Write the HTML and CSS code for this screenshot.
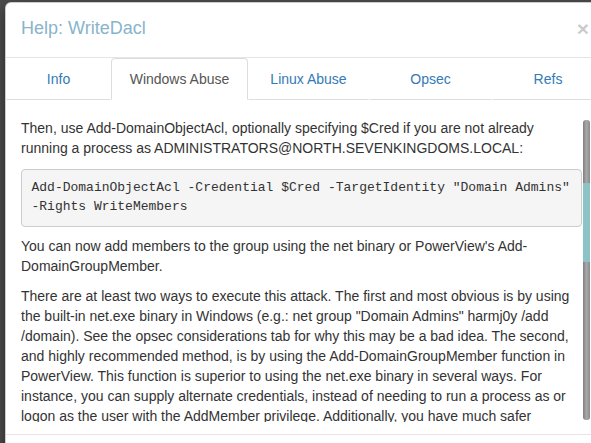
FILE: index.html
```html
<!DOCTYPE html>
<html>
<head>
<meta charset="utf-8">
<link rel="stylesheet" href="styles.css">
</head>
<body>
<div class="modal">
  <div class="modal-header">
    <span class="close">&times;</span>
    <h4 class="modal-title">Help: WriteDacl</h4>
  </div>
  <ul class="tabs">
    <li class="tab"><a>Info</a></li>
    <li class="tab active"><a>Windows Abuse</a></li>
    <li class="tab"><a>Linux Abuse</a></li>
    <li class="tab"><a>Opsec</a></li>
    <li class="tab"><a>Refs</a></li>
  </ul>
  <div class="modal-body">
    <div class="scroll-content">
      <p>Then, use Add-DomainObjectAcl, optionally specifying $Cred if you are not already running a process as ADMINISTRATORS@NORTH.SEVENKINGDOMS.LOCAL:</p>
      <pre>Add-DomainObjectAcl -Credential $Cred -TargetIdentity "Domain Admins" -Rights WriteMembers</pre>
      <p>You can now add members to the group using the net binary or PowerView's Add-DomainGroupMember.</p>
      <p>There are at least two ways to execute this attack. The first and most obvious is by using the built-in net.exe binary in Windows (e.g.: net group "Domain Admins" harmj0y /add /domain). See the opsec considerations tab for why this may be a bad idea. The second, and highly recommended method, is by using the Add-DomainGroupMember function in PowerView. This function is superior to using the net.exe binary in several ways. For instance, you can supply alternate credentials, instead of needing to run a process as or logon as the user with the AddMember privilege. Additionally, you have much safer execution options than you do with spawning net.exe (see the opsec tab).</p>
    </div>
    <div class="scrollbar"><div class="thumb"></div></div>
  </div>
  <div class="modal-footer"></div>
</div>
</body>
</html>
```
FILE: styles.css
```css
html, body {
  margin: 0;
  padding: 0;
  height: 100%;
  overflow: hidden;
}
body {
  background: #4e4e4e;
  font-family: "Liberation Sans", Arial, sans-serif;
  font-size: 14px;
  line-height: 1.42857;
  color: #333;
}
.modal {
  width: 600px;
  margin: 2px 0 0 5px;
  background: #fff;
  border: 1px solid rgba(0,0,0,.2);
  border-radius: 6px;
  box-shadow: 0 5px 15px rgba(0,0,0,.5);
  box-sizing: border-box;
}
.modal-header {
  padding: 13px 15px 15px;
  border-bottom: 1px solid #e5e5e5;
}
.modal-title {
  margin: 0;
  font-size: 18px;
  font-weight: normal;
  line-height: 1.42857;
  color: #88b4cc;
}
.close {
  float: right;
  font-size: 21px;
  font-weight: bold;
  line-height: 1;
  color: #000;
  opacity: .2;
  margin-top: 2px;
}
.tabs {
  list-style: none;
  margin: 0;
  padding: 0;
  display: grid;
  grid-template-columns: 105px 137px 121px 123px 1fr;
}
.tab a {
  display: block;
  text-align: center;
  padding: 10px 15px;
  line-height: 20px;
  color: #337ab7;
  border: 1px solid transparent;
  border-bottom-color: #ddd;
  border-radius: 4px 4px 0 0;
}
.tab.active a {
  color: #555;
  border-color: #ddd;
  border-bottom-color: #fff;
}
.modal-body {
  display: flex;
  padding: 19px 14px 12px 15px;
}
.scroll-content {
  width: 562px;
  height: 303px;
  overflow: hidden;
}
.scroll-content p {
  margin: 0 0 10px;
}
pre {
  margin: 0 0 10px;
  padding: 9.5px;
  font-family: "Liberation Mono", "Courier New", monospace;
  font-size: 13px;
  line-height: 1.42857;
  color: #333;
  background: #f5f5f5;
  border: 1px solid #ccc;
  border-radius: 4px;
  white-space: pre-wrap;
  word-wrap: break-word;
}
.scrollbar {
  width: 7px;
  height: 300px;
  margin: 1px 0 0 1px;
  border-radius: 3px;
  background: linear-gradient(to right, #7f7f7f, #a9a9a9 50%, #8a8a8a);
}
.thumb {
  margin-top: 63px;
  height: 79px;
  background: #8cc3c6;
}
.modal-footer {
  border-top: 1px solid #e5e5e5;
  height: 60px;
}
```
